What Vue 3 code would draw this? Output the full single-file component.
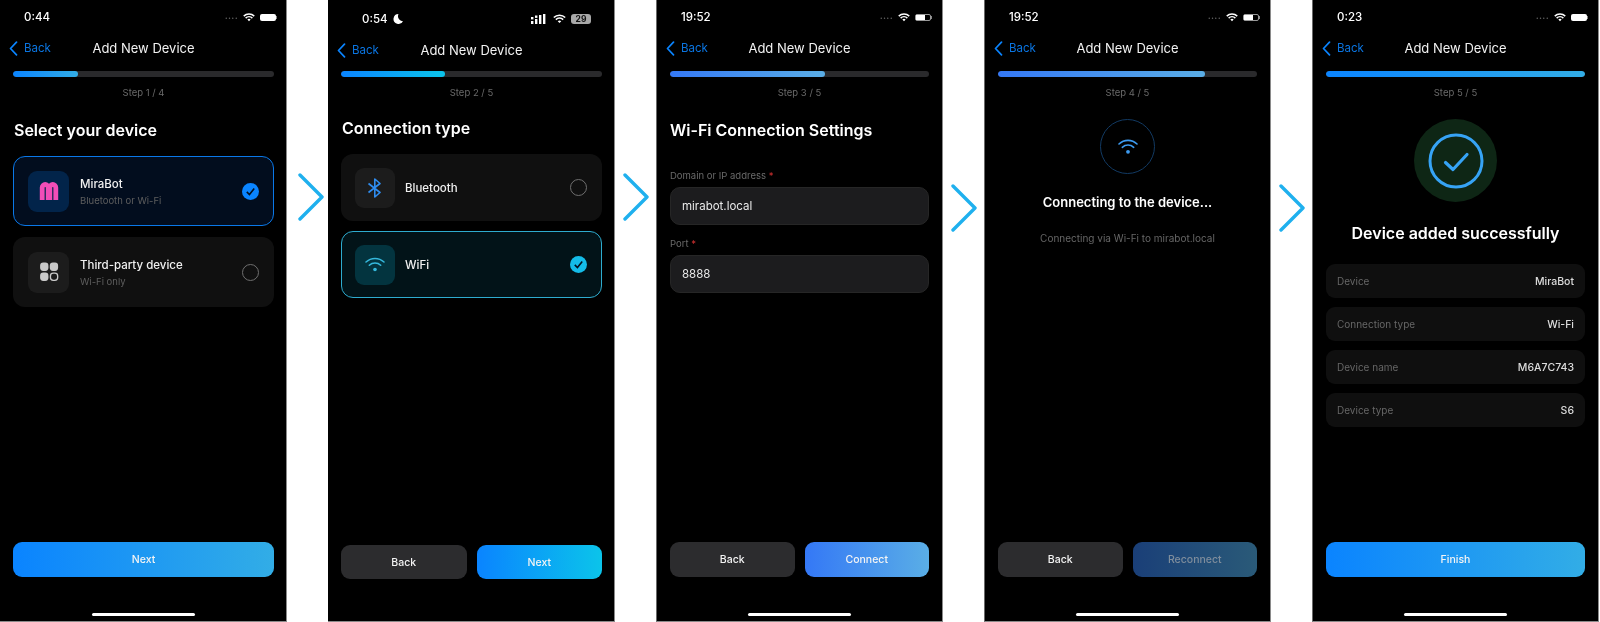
<template>
  <div class="flow">
    <template v-for="(s, i) in steps" :key="s.step">
      <section class="phone" :class="'phone--' + (i + 1)">
        <div class="status">
          <span class="time">{{ s.time }}</span>
          <svg v-if="s.moon" class="moon" viewBox="0 0 12 12"><path d="M6.5 1A5 5 0 1 0 11 8.2 5 5 0 0 1 6.500 1z" fill="#fff" /></svg>
          <span class="status-right">
            <svg v-if="s.signal" class="signal" viewBox="0 0 15 10">
              <rect x="0" y="7" width="2.400" height="3" fill="#fff" />
              <rect x="4" y="5" width="2.400" height="5" fill="#fff" />
              <rect x="8" y="1" width="2.400" height="9" fill="#fff" />
              <rect x="12" y="0" width="2.400" height="10" fill="#fff" />
              <rect x="0" y="3" width="2.400" height="2.400" fill="#fff" />
              <rect x="4" y="1.500" width="2.400" height="2.400" fill="#fff" />
            </svg>
            <span v-else class="dots">....</span>
            <svg class="wifi-mini" viewBox="0 0 16 12">
              <path d="M1 4.200a10 10 0 0 1 14 0M3.500 6.800a6.500 6.500 0 0 1 9 0" fill="none" stroke="#fff" stroke-width="2" />
              <path d="M5.800 8.800 8 11l2.200-2.200a3.200 3.200 0 0 0-4.400 0z" fill="#fff" />
            </svg>
            <span v-if="s.battery === 'badge'" class="battery-badge">29</span>
            <span v-else class="battery" :class="{ 'battery--half': s.battery === 'half' }"><i></i></span>
          </span>
        </div>

        <header class="nav">
          <span class="nav-back">
            <svg viewBox="0 0 9 15" class="nav-chevron"><path d="M7.500 1.200 1.500 7.500l6 6.300" fill="none" stroke="#0a84ff" stroke-width="1.700" stroke-linecap="round" stroke-linejoin="round" /></svg>
            Back
          </span>
          <span class="nav-title">Add New Device</span>
          <span></span>
        </header>

        <div class="track"><div class="fill" :class="s.tone" :style="{ width: s.progress + '%' }"></div></div>
        <p class="step">{{ s.step }}</p>

        <template v-if="s.kind === 'device'">
          <h2 class="title">Select your device</h2>
          <div class="cards">
            <article class="card card--blue">
              <div class="icon-box icon-box--navy">
                <svg viewBox="0 0 20 18" width="20" height="18">
                  <path d="M3.200 18V5.500a3 3 0 0 1 6 0V18M10.800 18V5.500a3 3 0 0 1 6 0V18" fill="none" stroke="#f24db8" stroke-width="4.800" />
                </svg>
              </div>
              <div class="card-text">
                <strong>MiraBot</strong>
                <small>Bluetooth or Wi-Fi</small>
              </div>
              <span class="tick tick--blue"><svg viewBox="0 0 16 16"><path d="M4.500 8.300 7 10.800l4.500-5.600" fill="none" stroke="#04101f" stroke-width="1.500" /></svg></span>
            </article>
            <article class="card">
              <div class="icon-box">
                <svg viewBox="0 0 18 18" width="20" height="20">
                  <rect x="1" y="0.500" width="7.500" height="7.500" rx="2.800" fill="#c9c9c9" />
                  <rect x="9.700" y="0.500" width="7.500" height="7.500" rx="2.800" fill="#c9c9c9" />
                  <rect x="1" y="9.500" width="7.500" height="7.500" rx="2.800" fill="#c9c9c9" />
                  <rect x="10.300" y="10" width="6.500" height="6.500" rx="2.500" fill="none" stroke="#c9c9c9" stroke-width="1.200" />
                </svg>
              </div>
              <div class="card-text">
                <strong>Third-party device</strong>
                <small>Wi-Fi only</small>
              </div>
              <span class="radio"></span>
            </article>
          </div>
        </template>

        <template v-else-if="s.kind === 'connection'">
          <h2 class="title">Connection type</h2>
          <div class="cards">
            <article class="card">
              <div class="icon-box">
                <svg viewBox="0 0 16 20" width="16" height="20">
                  <path d="M1.500 5.500 13 14.500 7.800 19V1l5.200 4.500L1.500 14.500" fill="none" stroke="#2f8df0" stroke-width="1.600" stroke-linejoin="round" />
                </svg>
              </div>
              <div class="card-text"><strong>Bluetooth</strong></div>
              <span class="radio"></span>
            </article>
            <article class="card card--teal">
              <div class="icon-box icon-box--teal">
                <svg viewBox="0 0 20 16" width="20" height="16">
                  <path d="M1 5a13 13 0 0 1 18 0M4.300 8.300a8.300 8.300 0 0 1 11.400 0" fill="none" stroke="#35b8dc" stroke-width="1.500" stroke-linecap="round" />
                  <circle cx="10" cy="12.500" r="1.800" fill="#35b8dc" />
                </svg>
              </div>
              <div class="card-text"><strong>WiFi</strong></div>
              <span class="tick tick--teal"><svg viewBox="0 0 16 16"><path d="M4.500 8.300 7 10.800l4.500-5.600" fill="none" stroke="#04101f" stroke-width="1.500" /></svg></span>
            </article>
          </div>
        </template>

        <template v-else-if="s.kind === 'settings'">
          <h2 class="title">Wi-Fi Connection Settings</h2>
          <label class="field field--first">
            <span>Domain or IP address <b>*</b></span>
            <div class="input">mirabot.local</div>
          </label>
          <label class="field">
            <span>Port <b>*</b></span>
            <div class="input">8888</div>
          </label>
        </template>

        <div v-else-if="s.kind === 'connecting'" class="center">
          <div class="ring">
            <svg viewBox="0 0 20 16" width="20" height="16">
              <path d="M1 5a13 13 0 0 1 18 0M4.300 8.300a8.300 8.300 0 0 1 11.400 0" fill="none" stroke="#3d9bf0" stroke-width="1.600" stroke-linecap="round" />
              <circle cx="10" cy="12.800" r="1.900" fill="#3d9bf0" />
            </svg>
          </div>
          <h3>Connecting to the device...</h3>
          <p>Connecting via Wi-Fi to mirabot.local</p>
        </div>

        <div v-else class="center center--done">
          <div class="halo">
            <svg viewBox="0 0 56 56" width="56" height="56">
              <circle cx="28" cy="28" r="26" fill="none" stroke="#36a3f5" stroke-width="3" />
              <path d="M17.500 29.500 25 36.500 39 21.500" fill="none" stroke="#36a3f5" stroke-width="3.200" stroke-linecap="round" stroke-linejoin="round" />
            </svg>
          </div>
          <h2>Device added successfully</h2>
          <dl class="rows">
            <div v-for="r in summary" :key="r[0]" class="row">
              <dt>{{ r[0] }}</dt>
              <dd>{{ r[1] }}</dd>
            </div>
          </dl>
        </div>

        <footer class="actions">
          <button v-if="s.back" class="btn btn--back">Back</button>
          <button class="btn" :class="s.tone">{{ s.action }}</button>
        </footer>
        <div v-if="s.home" class="home"></div>
      </section>

      <div v-if="i < steps.length - 1" class="arrow" :class="{ 'arrow--first': i === 0, 'arrow--low': i > 1 }">
        <svg viewBox="0 0 26 48" width="26" height="48"><path d="M2 2 24 24 2 46" fill="none" stroke="#1fb0ee" stroke-width="3.400" stroke-linecap="round" stroke-linejoin="round" /></svg>
      </div>
    </template>
  </div>
</template>

<script setup>
const steps = [
  { kind: "device", time: "0:44", step: "Step 1 / 4", progress: 25, tone: "tone-sky", action: "Next", back: false, home: true, battery: "full" },
  { kind: "connection", time: "0:54", moon: true, signal: true, step: "Step 2 / 5", progress: 40, tone: "tone-cyan", action: "Next", back: true, home: false, battery: "badge" },
  { kind: "settings", time: "19:52", step: "Step 3 / 5", progress: 60, tone: "tone-soft", action: "Connect", back: true, home: true, battery: "half" },
  { kind: "connecting", time: "19:52", step: "Step 4 / 5", progress: 80, tone: "tone-soft", action: "Reconnect", back: true, home: true, battery: "half" },
  { kind: "done", time: "0:23", step: "Step 5 / 5", progress: 100, tone: "tone-sky", action: "Finish", back: false, home: true, battery: "full" },
];

const summary = [
  ["Device", "MiraBot"],
  ["Connection type", "Wi-Fi"],
  ["Device name", "M6A7C743"],
  ["Device type", "S6"],
];
</script>

<style>
html,
body {
  margin: 0;
  background: #fff;
}
</style>

<style scoped>
.flow {
  display: flex;
  width: 1600px;
  height: 622px;
  overflow: hidden;
  font-family: Inter, "Liberation Sans", sans-serif;
  color: #fff;
}

.phone {
  display: flex;
  flex-direction: column;
  flex: none;
  box-sizing: border-box;
  width: 287px;
  height: 622px;
  padding: 0 12px 0 13px;
  background: #000;
  border-right: 1px solid #8a8a8a;
  border-bottom: 1px solid #8a8a8a;
  filter: blur(0.3px);
}

.phone--3,
.phone--4,
.phone--5 {
  border-left: 1px solid #6a6a6a;
  padding: 0 13px;
}

.arrow {
  flex: none;
  box-sizing: border-box;
  width: 41px;
  display: flex;
  justify-content: center;
  padding-top: 173px;
}

.arrow--first {
  padding-left: 6px;
}

.arrow--low {
  padding-top: 184px;
}

/* status bar */
.status {
  display: flex;
  align-items: center;
  height: 34px;
  margin: 0 -2px 0 11px;
  font-size: 11.500px;
  font-weight: 500;
}

.phone--2 .status {
  margin: 2px 11px 0 21px;
}

.moon {
  width: 12px;
  height: 12px;
  margin-left: 4px;
}

.status-right {
  display: flex;
  align-items: center;
  gap: 5px;
  margin-left: auto;
}

.dots {
  color: #666;
  font-size: 10px;
  letter-spacing: 0.300px;
  position: relative;
  top: -2px;
}

.signal {
  width: 15px;
  height: 10px;
  margin-right: 2px;
}

.wifi-mini {
  width: 12px;
  height: 9px;
}

.phone--2 .wifi-mini {
  width: 13px;
  height: 10px;
}

.battery {
  position: relative;
  display: block;
  box-sizing: border-box;
  width: 16px;
  height: 7px;
  background: #fff;
  border-radius: 2px;
}

.battery::after {
  content: "";
  position: absolute;
  left: 16px;
  top: 2px;
  width: 1px;
  height: 3px;
  background: #888;
}

.battery--half {
  background: none;
  border: 1px solid #999;
}

.battery--half::after {
  left: 15px;
  top: 1px;
}

.battery--half i {
  display: block;
  width: 9px;
  height: 100%;
  background: #fff;
}

.battery-badge {
  width: 20px;
  height: 10px;
  line-height: 10px;
  border-radius: 3px;
  background: #a8a8a8;
  color: #111;
  font-size: 8.500px;
  font-weight: 700;
  text-align: center;
}

/* nav */
.nav {
  display: grid;
  grid-template-columns: 1fr auto 1fr;
  align-items: center;
  height: 28px;
  margin: 0 -4px;
  font-size: 13px;
}

.nav-back {
  display: flex;
  align-items: center;
  gap: 6px;
  color: #0a74e0;
  font-size: 11.500px;
}

.nav-chevron {
  width: 9px;
  height: 15px;
}

.nav-title {
  color: #f2f2f2;
}

.track {
  height: 6px;
  margin-top: 9px;
  border-radius: 3px;
  background: #2a2a2c;
  overflow: hidden;
}

.phone--2 .track {
  margin-top: 7px;
}

.fill {
  height: 100%;
  border-radius: 3px;
}

.tone-sky {
  background: linear-gradient(90deg, #0a84ff, #32ade6);
}

.tone-cyan {
  background: linear-gradient(90deg, #0a84ff, #0bc4ea);
}

.tone-soft {
  background: linear-gradient(90deg, #3478f6, #5aaee6);
}

.step {
  margin: 9px 0 0;
  height: 14px;
  line-height: 14px;
  text-align: center;
  font-size: 9.500px;
  color: #6a6a6a;
}

.title {
  margin: 19px 0 0 1px;
  height: 22px;
  line-height: 22px;
  font-size: 16px;
  font-weight: 600;
}

.phone--2 .title {
  margin-top: 17px;
}

.phone--3 .title {
  margin-left: 0;
}

/* option cards */
.cards {
  display: flex;
  flex-direction: column;
  gap: 11px;
  margin-top: 15px;
}

.card {
  display: flex;
  align-items: center;
  box-sizing: border-box;
  height: 70px;
  padding: 0 14px 0 14px;
  border: 1.500px solid transparent;
  border-radius: 12px;
  background: #101010;
}

.phone--2 .card {
  height: 67px;
  padding: 0 14px 0 13px;
}

.phone--2 .cards {
  gap: 10px;
}

.card--blue {
  border-color: #0a78e8;
  background: #020d1e;
}

.phone--2 .card--teal {
  border-color: #2eaccf;
  background: #021318;
}

.icon-box {
  display: flex;
  align-items: center;
  justify-content: center;
  flex: none;
  width: 41px;
  height: 41px;
  border-radius: 9px;
  background: #1c1c1c;
}

.phone--2 .icon-box {
  width: 40px;
  height: 40px;
}

.icon-box--navy {
  background: #02244a;
}

.phone--2 .icon-box--teal {
  background: #03343f;
}

.card-text {
  display: flex;
  flex-direction: column;
  gap: 4px;
  margin-left: 11px;
  flex: 1;
}

.phone--2 .card-text {
  margin-left: 10px;
}

.card-text strong {
  font-size: 11.500px;
  font-weight: 500;
  color: #f0f0f0;
}

.card-text small {
  font-size: 9.500px;
  color: #5e5e5e;
}

.radio {
  box-sizing: border-box;
  width: 17px;
  height: 17px;
  border: 1.300px solid #6f6f6f;
  border-radius: 50%;
}

.tick {
  display: block;
  width: 17px;
  height: 17px;
  border-radius: 50%;
}

.tick svg {
  display: block;
  width: 17px;
  height: 17px;
}

.tick--blue {
  background: #0a84ff;
}

.tick--teal {
  background: #14bce8;
}

/* settings form */
.field {
  display: block;
  margin-top: 12px;
}

.field--first {
  margin-top: 28px;
}

.field span {
  display: block;
  height: 14px;
  line-height: 14px;
  font-size: 9.500px;
  color: #6a6a6a;
}

.field b {
  color: #d03030;
  font-weight: 400;
}

.input {
  box-sizing: border-box;
  height: 38px;
  line-height: 36px;
  margin-top: 4px;
  padding: 0 11px;
  border: 1px solid #262626;
  border-radius: 10px;
  background: #1c1c1e;
  color: #e8e8e8;
  font-size: 11.500px;
}

/* center blocks */
.center {
  display: flex;
  flex-direction: column;
  align-items: center;
}

.ring {
  display: flex;
  align-items: center;
  justify-content: center;
  box-sizing: border-box;
  width: 55px;
  height: 55px;
  margin-top: 19px;
  border: 1px solid #123a63;
  border-radius: 50%;
}

.center h3 {
  margin: 19px 0 0;
  height: 18px;
  line-height: 18px;
  font-size: 13px;
  font-weight: 600;
}

.center p {
  margin: 20px 0 0;
  height: 14px;
  line-height: 14px;
  font-size: 10px;
  color: #666;
}

.halo {
  display: flex;
  align-items: center;
  justify-content: center;
  width: 83px;
  height: 83px;
  margin-top: 19px;
  border-radius: 50%;
  background: #0e2615;
}

.center--done h2 {
  margin: 20px 0 0;
  height: 22px;
  line-height: 22px;
  font-size: 16px;
  font-weight: 600;
}

.rows {
  display: flex;
  flex-direction: column;
  gap: 9px;
  align-self: stretch;
  margin: 20px 0 0;
}

.row {
  display: flex;
  justify-content: space-between;
  align-items: center;
  height: 34px;
  padding: 0 11px;
  border-radius: 9px;
  background: #0f0f0f;
  font-size: 10px;
}

.row dt {
  color: #666;
}

.row dd {
  margin: 0;
  color: #ddd;
  font-size: 10.500px;
  font-weight: 500;
}

/* footer */
.actions {
  display: flex;
  gap: 10px;
  margin-top: auto;
}

.phone--2 .actions {
  margin-bottom: 42px;
}

.btn {
  flex: 1;
  height: 35px;
  padding: 0;
  border: 0;
  border-radius: 9px;
  color: #f4f4f4;
  font-family: inherit;
  font-size: 10.500px;
  font-weight: 500;
}

.phone--2 .btn {
  height: 34px;
}

.btn--back {
  background: #2c2c2e;
}

.phone--4 .btn:last-child {
  background: linear-gradient(90deg, #1a3f78, #2a5a78);
  color: #7f8d9c;
}

.home {
  width: 103px;
  height: 3px;
  margin: 36px auto 5px;
  border-radius: 2px;
  background: #fff;
}
</style>
